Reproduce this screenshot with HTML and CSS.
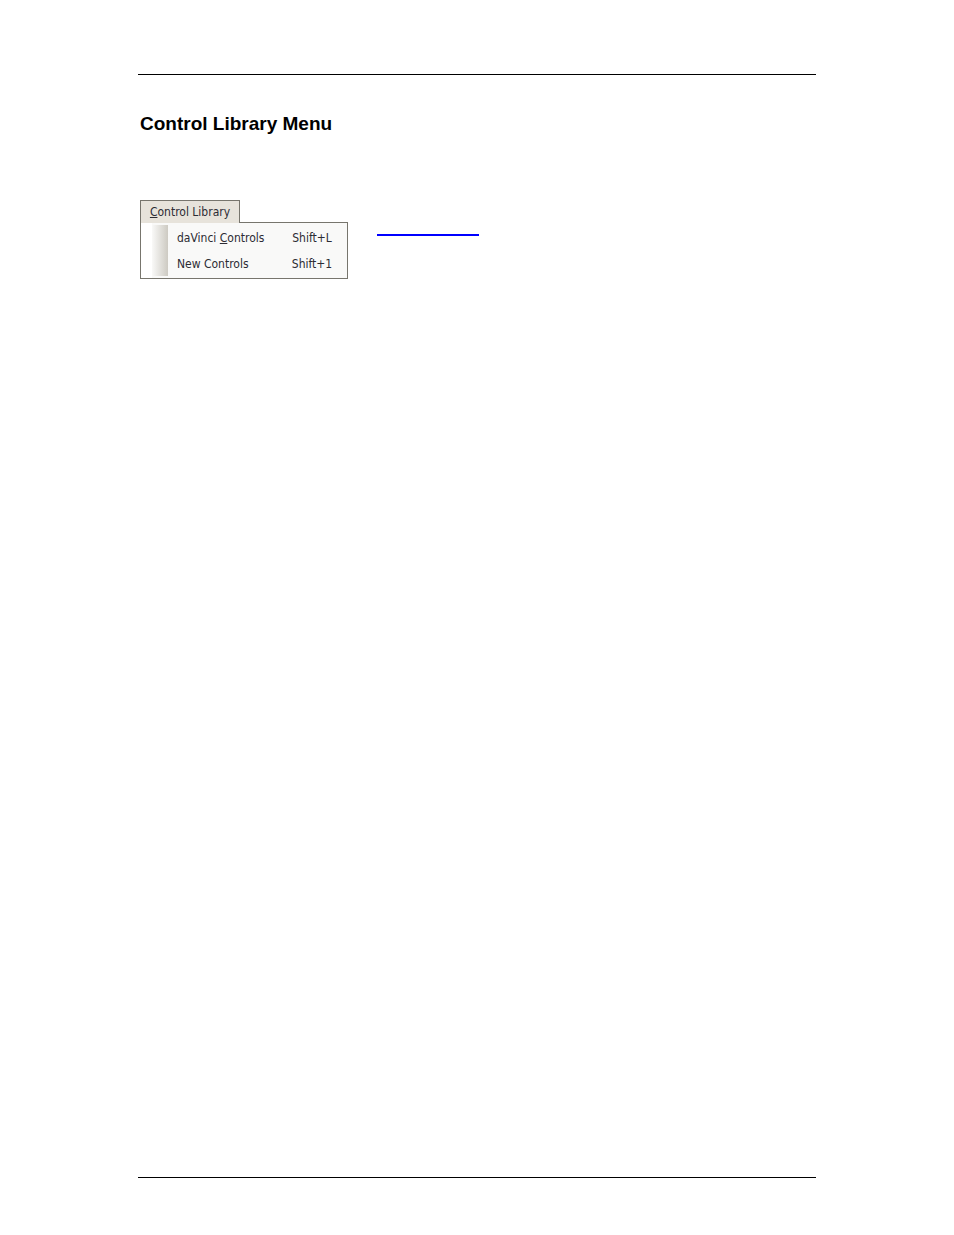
FILE: index.html
```
<!DOCTYPE html>
<html lang="en">
<head>
<meta charset="utf-8">
<title>Control Library Menu</title>
<link rel="stylesheet" href="styles.css">
</head>
<body>
<main class="page">
  <h1 class="title">Control Library Menu</h1>
  <div class="entry">
    <nav class="menu">
      <button class="menu-tab" type="button"><u>C</u>ontrol Library</button>
      <div class="menu-list">
        <button class="menu-item" type="button"><span>daVinci <u>C</u>ontrols</span><span class="shortcut">Shift+L</span></button>
        <button class="menu-item" type="button"><span>New Controls</span><span class="shortcut">Shift+1</span></button>
      </div>
    </nav>
    <a class="entry-link" href="#"></a>
  </div>
</main>
</body>
</html>
```

FILE: styles.css
```
* {
  box-sizing: border-box;
}

body {
  margin: 0;
  background: #fff;
  color: #000;
  font-family: "Liberation Sans", Arial, sans-serif;
}

.page {
  min-height: calc(100vh - 131px);
  margin: 74px 138px 57px;
  padding: 38px 2px;
  border-top: 1px solid #000;
  border-bottom: 1px solid #000;
}

.title {
  margin: 0;
  font-size: 19px;
  line-height: 22px;
}

.entry {
  display: flex;
  align-items: flex-start;
  gap: 29px;
  margin-top: 65px;
}

.menu {
  display: flex;
  flex-direction: column;
  align-items: flex-start;
  width: 208px;
}

.menu-tab,
.menu-item {
  font-family: "DejaVu Sans Condensed", Tahoma, sans-serif;
  font-size: 12px;
  line-height: 14px;
  color: #2c2c34;
  white-space: nowrap;
}

.menu-tab {
  z-index: 1;
  width: 100px;
  height: 23px;
  margin-bottom: -1px;
  padding: 0;
  border: 1px solid #77756d;
  border-bottom: 0;
  background: #e7e3db;
}

.menu-list {
  width: 100%;
  padding: 2px 0 1px;
  border: 1px solid #77756d;
  background: linear-gradient(to right, #f9f9f8, #cdcac2) 11px 2px / 16px calc(100% - 4px) no-repeat, linear-gradient(to right, #fff 11px, #f9f9f8 11px);
}

.menu-item {
  display: flex;
  align-items: center;
  justify-content: space-between;
  width: 100%;
  height: 26px;
  padding: 0 14px 0 36px;
  border: 0;
  background: transparent;
}

.shortcut {
  width: 42px;
  text-align: center;
}

.entry-link {
  width: 102px;
  height: 36px;
  border-bottom: 2px solid #00f;
}
```
